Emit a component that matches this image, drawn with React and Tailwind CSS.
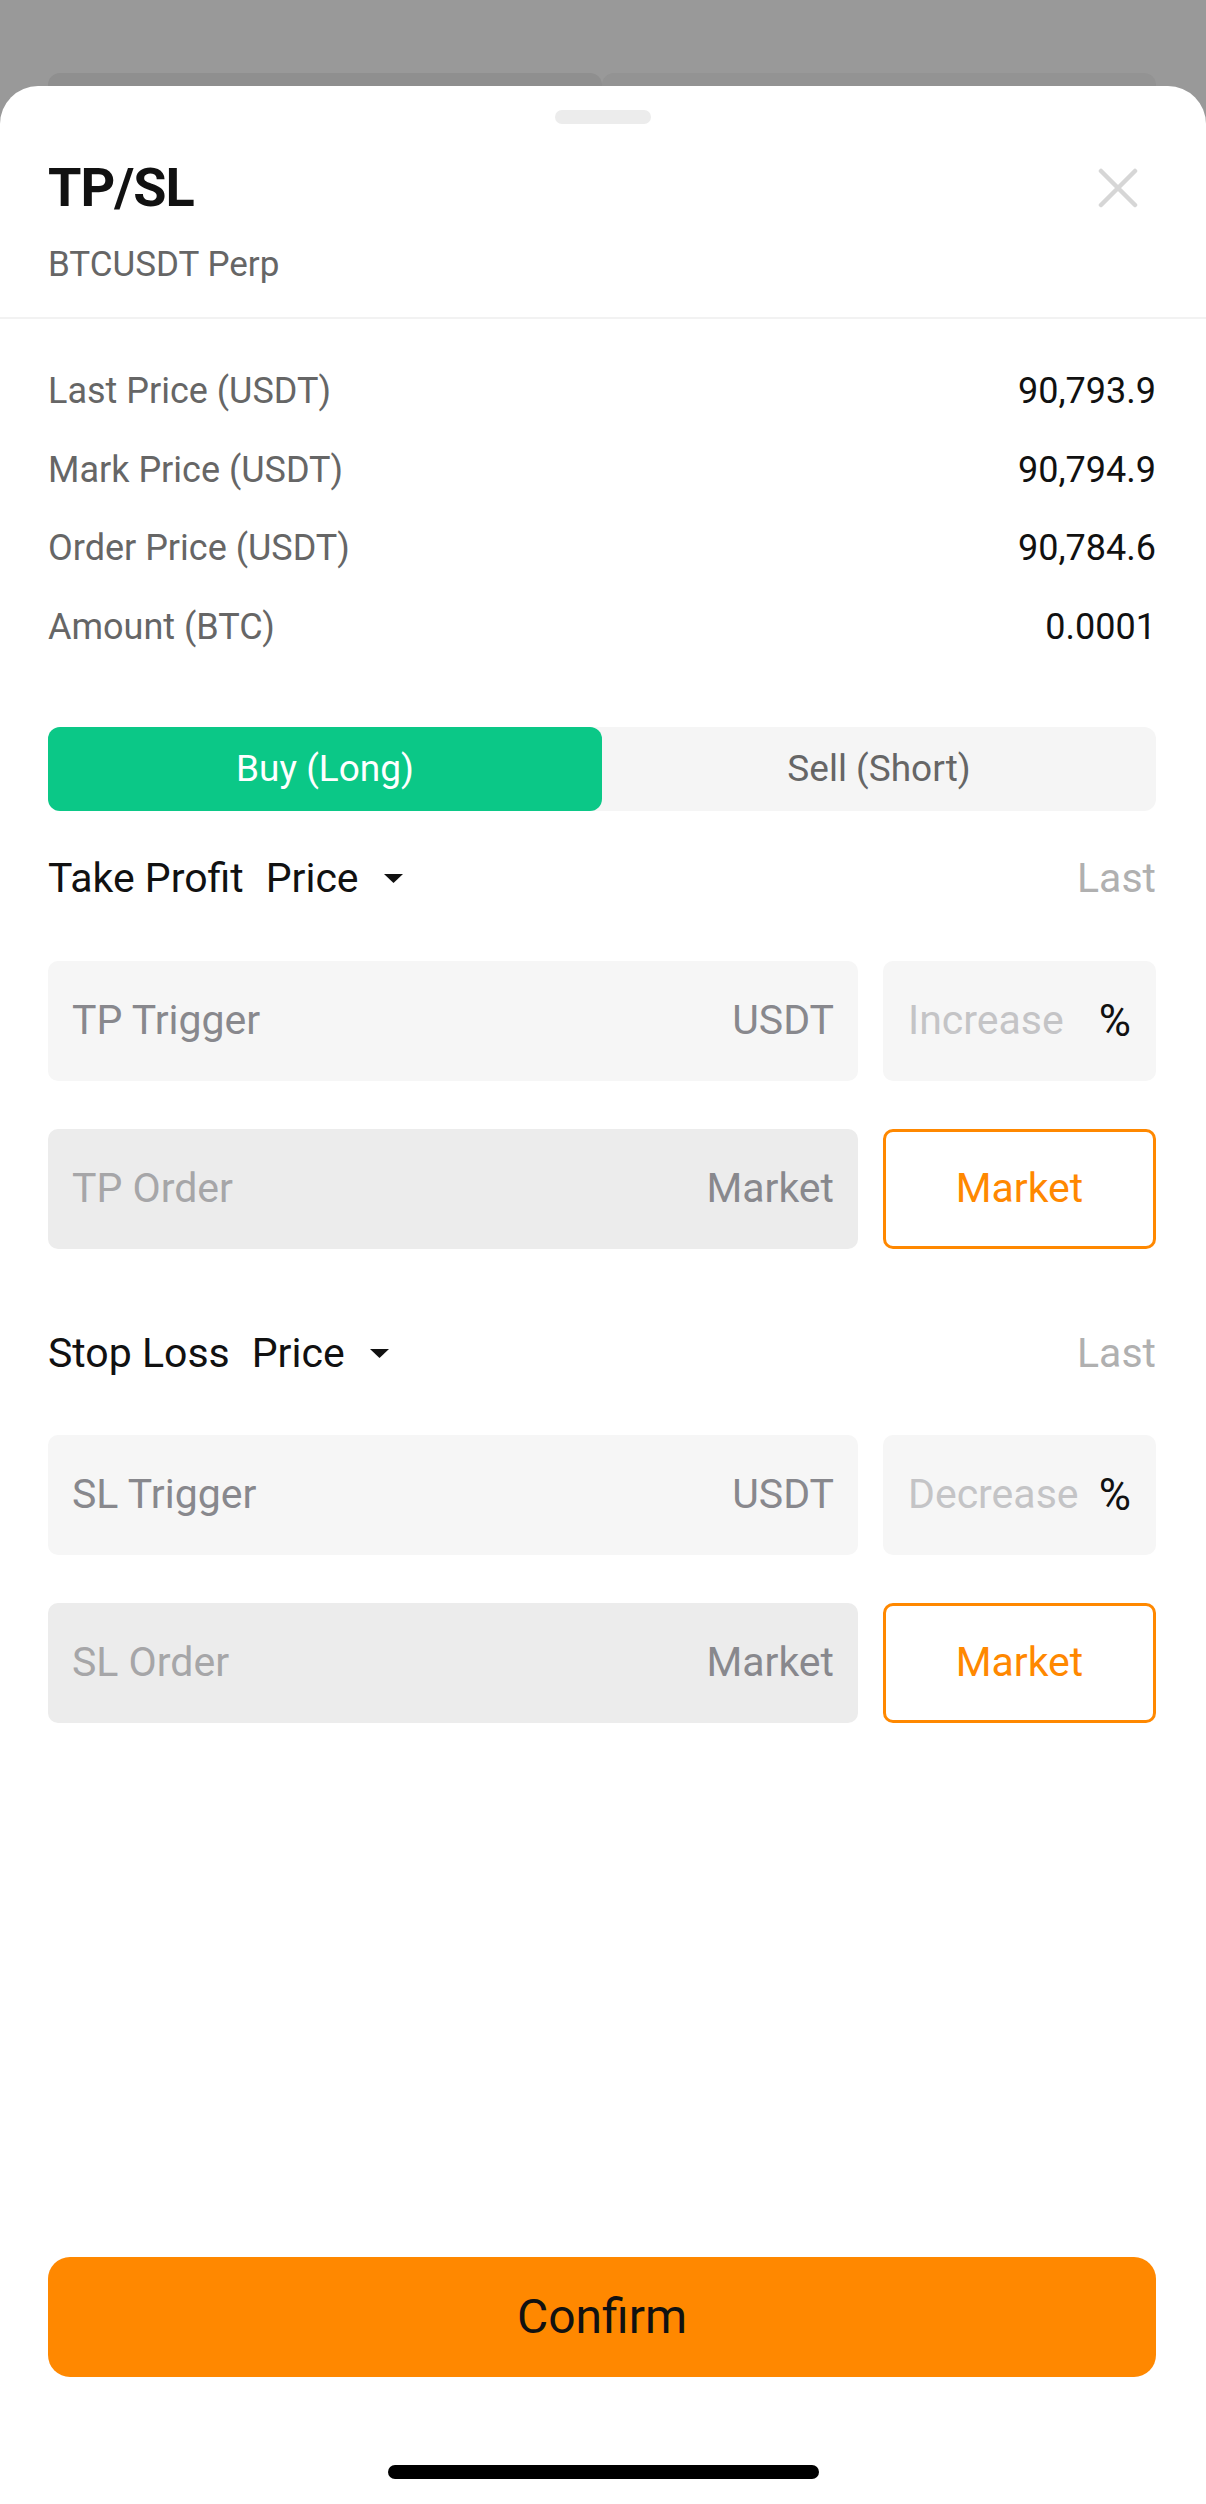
import React, { useState } from "react";

const font = { fontFamily: "Roboto, 'Noto Sans', sans-serif" };

// ---------------- INFO ROWS ----------------
const info = [
  { label: "Last Price (USDT)", value: "90,793.9" },
  { label: "Mark Price (USDT)", value: "90,794.9" },
  { label: "Order Price (USDT)", value: "90,784.6" },
  { label: "Amount (BTC)", value: "0.0001" },
];

function Caret() {
  return (
    <svg width="19" height="9" viewBox="0 0 19 9" className="ml-[25px]">
      <path d="M0 0 H19 L9.5 9 Z" fill="#111111" />
    </svg>
  );
}

function SectionHead({ title }) {
  return (
    <div className="flex items-center justify-between h-[50px] text-[41px] leading-[50px]">
      <div className="flex items-center text-[#111111]">
        <span>{title}</span>
        <span className="ml-[22px]">Price</span>
        <Caret />
      </div>
      <span className="text-[#b0b0b0]">Last</span>
    </div>
  );
}

function TriggerRow({ prefix, side }) {
  return (
    <div className="flex gap-[25px]">
      <div className="flex-1 h-[120px] rounded-[10px] bg-[#f6f6f6] px-[24px] flex items-center justify-between text-[41px] text-[#88888d]">
        <span>{prefix} Trigger</span>
        <span>USDT</span>
      </div>
      <div className="w-[273px] h-[120px] rounded-[10px] bg-[#f6f6f6] px-[25px] flex items-center justify-between text-[41px]">
        <span className="text-[#c4c4c6]">{side}</span>
        <span className="text-[#111111] text-[44px]">%</span>
      </div>
    </div>
  );
}

function OrderRow({ prefix }) {
  return (
    <div className="flex gap-[25px]">
      <div className="flex-1 h-[120px] rounded-[10px] bg-[#ececec] px-[24px] flex items-center justify-between text-[41px]">
        <span className="text-[#a6a6a8]">{prefix} Order</span>
        <span className="text-[#88888d]">Market</span>
      </div>
      <div className="w-[273px] h-[120px] rounded-[10px] border-[3px] border-[#ff8800] bg-white flex items-center justify-center text-[41px] text-[#ff8800]">
        Market
      </div>
    </div>
  );
}

export default function App() {
  const [side, setSide] = useState("buy");

  return (
    <div className="w-[1206px] h-[2504px] bg-[#999999] flex flex-col overflow-hidden" style={font}>
      {/* ---------------- BACKDROP ---------------- */}
      <div className="h-[86px] shrink-0 flex items-end pl-[48px] pr-[50px]">
        <div className="w-[554px] h-[13px] rounded-t-[12px] bg-[#8f8f8f]" />
        <div className="flex-1 h-[13px] rounded-t-[12px] bg-[#939393]" />
      </div>

      {/* ---------------- SHEET ---------------- */}
      <div className="flex-1 bg-white rounded-t-[38px] flex flex-col">
        <div className="pt-[24px] flex justify-center">
          <div className="w-[96px] h-[14px] rounded-full bg-[#ececec]" />
        </div>

        <div className="pl-[48px] pr-[50px]">
          <div className="mt-[36px] flex items-center justify-between h-[56px]">
            <h1 className="text-[54px] leading-[56px] font-bold text-[#111111] tracking-[-1px]">TP/SL</h1>
            <svg width="40" height="40" viewBox="0 0 40 40" className="mr-[18px]">
              <path d="M3 3 L37 37 M37 3 L3 37" stroke="#d6d6d6" strokeWidth="4.5" strokeLinecap="round" />
            </svg>
          </div>
          <div className="mt-[29px] h-[40px] text-[35px] leading-[40px] text-[#666666]">BTCUSDT Perp</div>
        </div>

        <div className="mt-[32px] h-[2px] bg-[#f2f2f2]" />

        <div className="pl-[48px] pr-[50px]">
          <div className="pt-[33px]">
            {info.map((r) => (
              <div key={r.label} className="h-[78.5px] flex items-center justify-between text-[36px]">
                <span className="text-[#666666]">{r.label}</span>
                <span className="text-[#111111]">{r.value}</span>
              </div>
            ))}
          </div>

          {/* ---------------- SIDE TOGGLE ---------------- */}
          <div className="mt-[61px] h-[84px] rounded-[12px] bg-[#f5f5f5] flex text-[37px]">
            <button
              onClick={() => setSide("buy")}
              className={`w-[554px] rounded-[12px] ${side === "buy" ? "bg-[#0bc887] text-white" : "text-[#666666]"}`}
            >
              Buy (Long)
            </button>
            <button
              onClick={() => setSide("sell")}
              className={`flex-1 rounded-[12px] ${side === "sell" ? "bg-[#f6465d] text-white" : "text-[#666666]"}`}
            >
              Sell (Short)
            </button>
          </div>

          {/* ---------------- TAKE PROFIT ---------------- */}
          <div className="mt-[42px]">
            <SectionHead title="Take Profit" />
          </div>
          <div className="mt-[58px]">
            <TriggerRow prefix="TP" side="Increase" />
          </div>
          <div className="mt-[48px]">
            <OrderRow prefix="TP" />
          </div>

          {/* ---------------- STOP LOSS ---------------- */}
          <div className="mt-[79px]">
            <SectionHead title="Stop Loss" />
          </div>
          <div className="mt-[57px]">
            <TriggerRow prefix="SL" side="Decrease" />
          </div>
          <div className="mt-[48px]">
            <OrderRow prefix="SL" />
          </div>
        </div>

        <div className="flex-1" />

        {/* ---------------- CONFIRM ---------------- */}
        <div className="pl-[48px] pr-[50px]">
          <button className="w-full h-[120px] rounded-[22px] bg-[#ff8800] text-[48px] text-[#111111]">
            Confirm
          </button>
        </div>
        <div className="mt-[88px] pb-[25px] flex justify-center">
          <div className="w-[431px] h-[14px] rounded-full bg-black" />
        </div>
      </div>
    </div>
  );
}
